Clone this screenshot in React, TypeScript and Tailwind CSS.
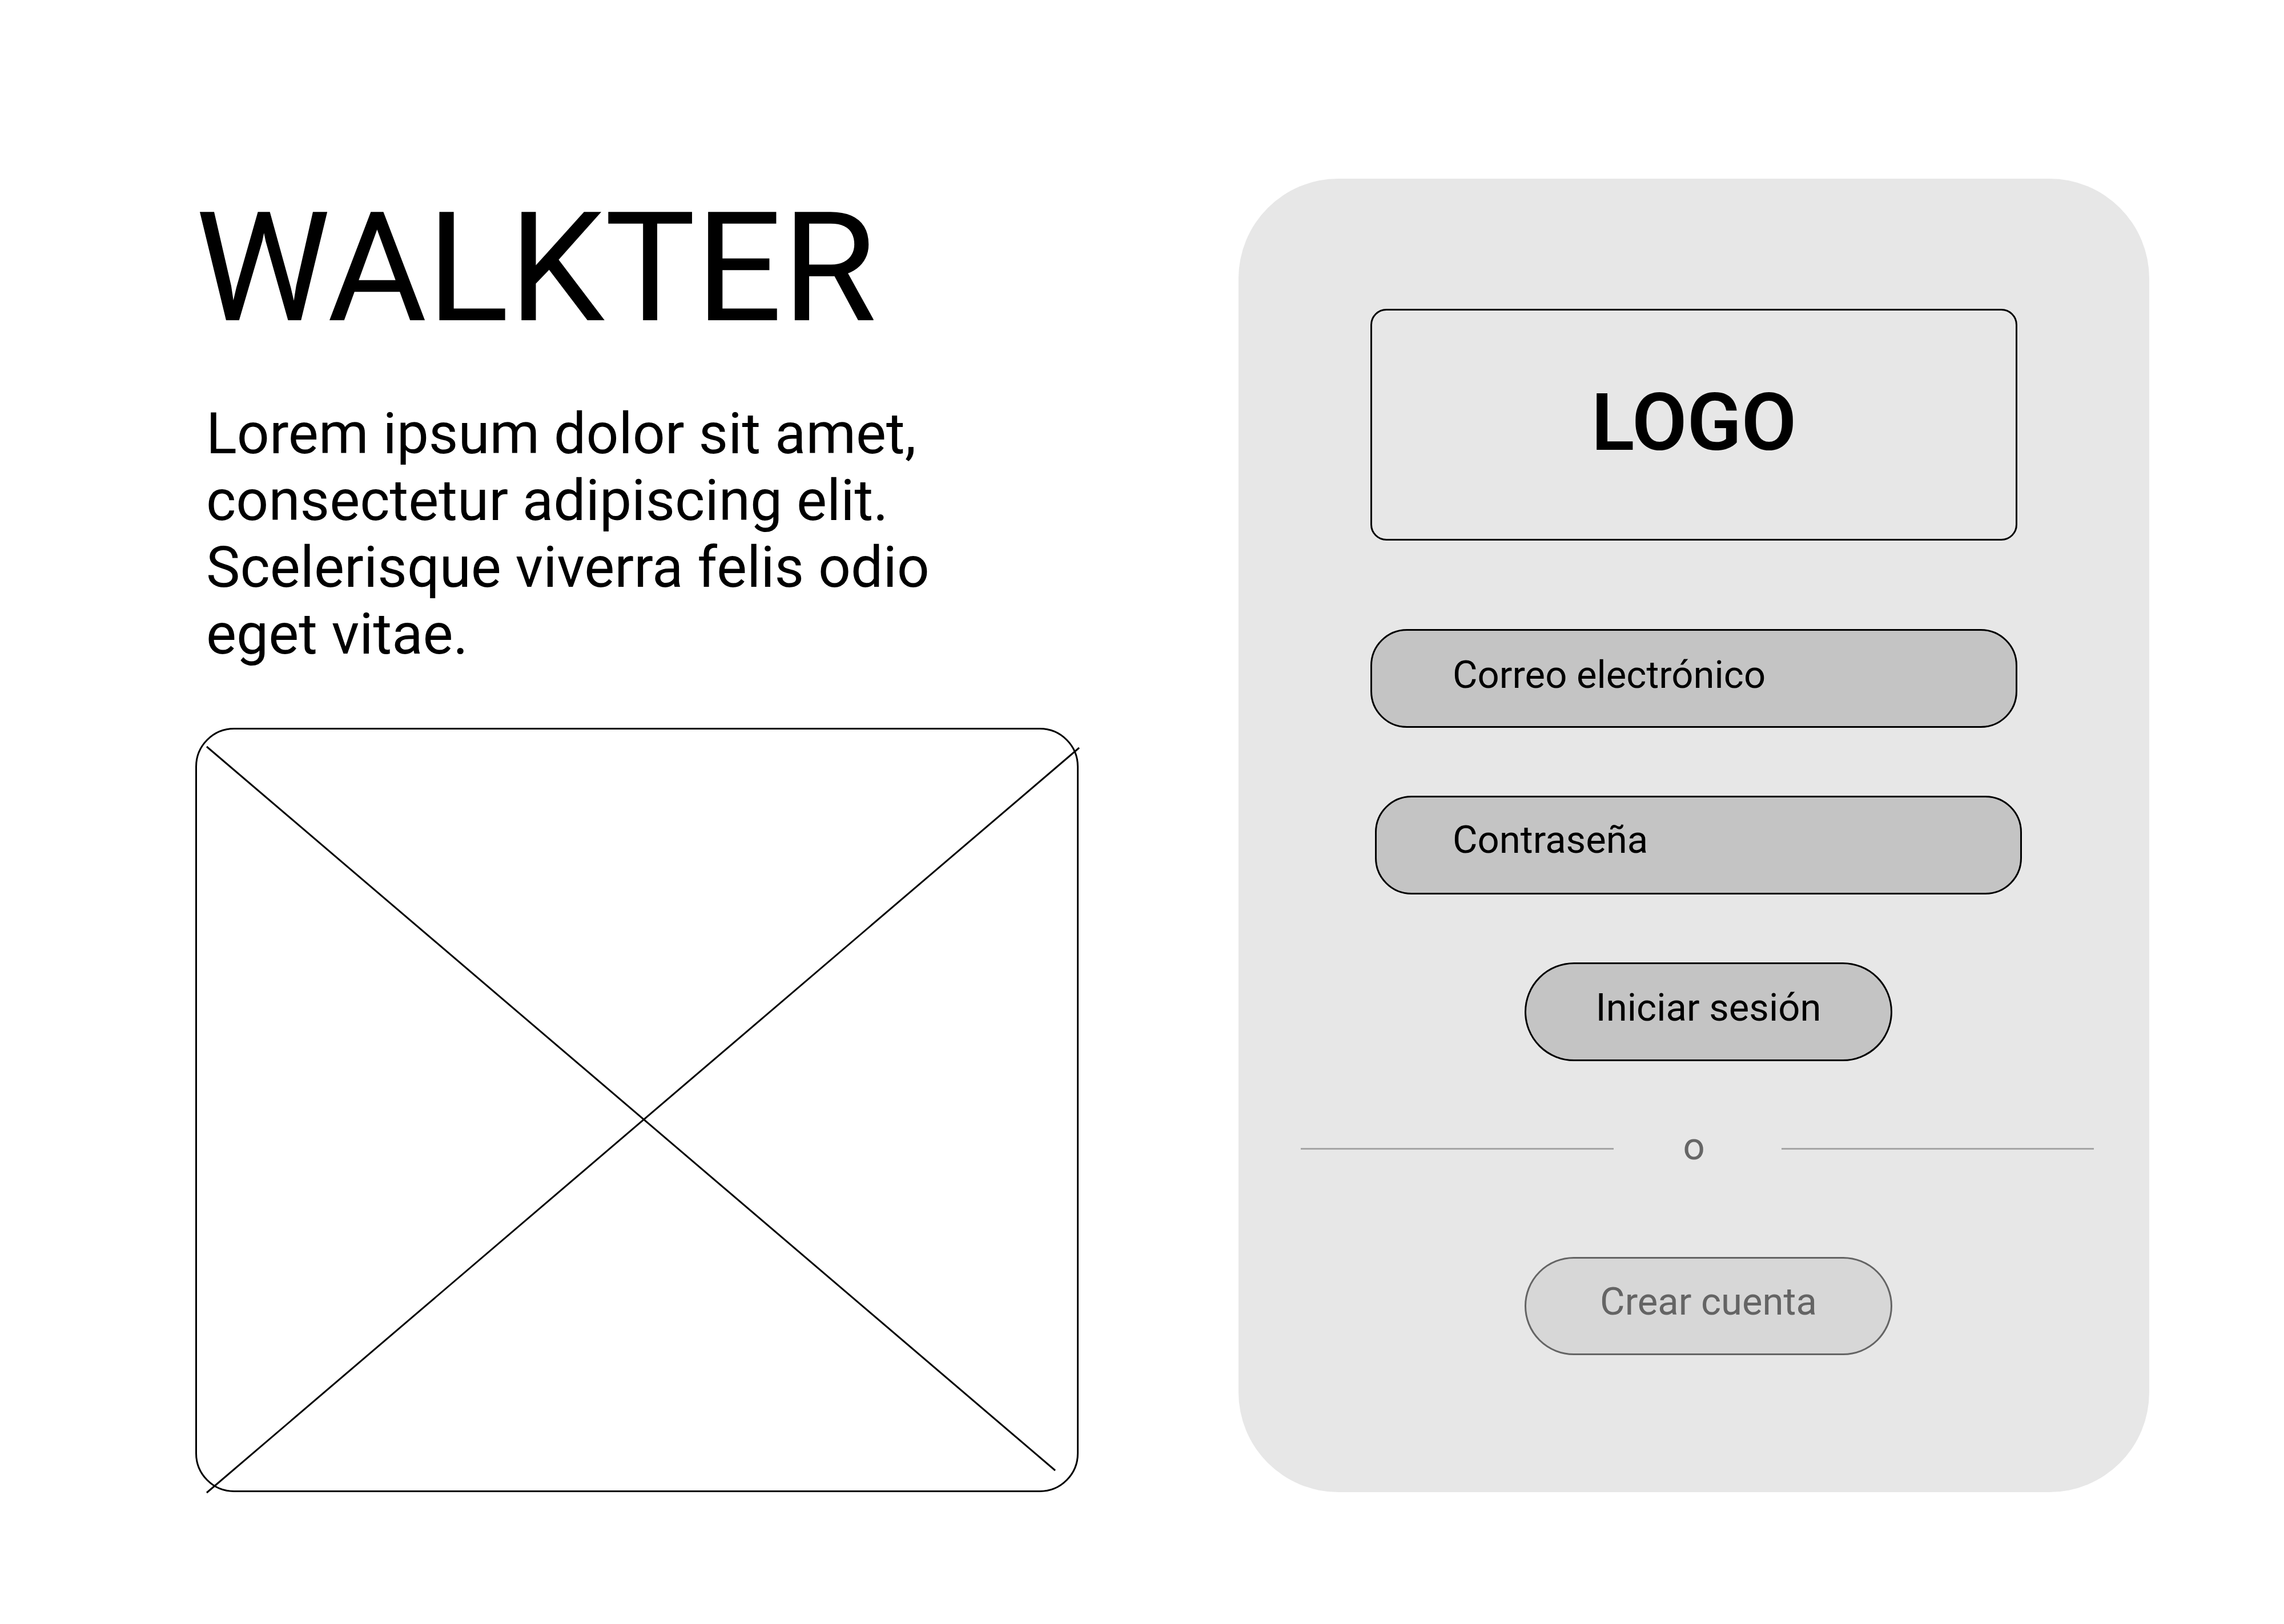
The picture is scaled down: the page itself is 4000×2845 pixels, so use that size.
import type { InputHTMLAttributes, ReactNode } from "react";

// The label lies over the empty input and gives way once something is typed.
function Field({
  id,
  label,
  className,
  labelClassName,
  ...rest
}: {
  id: string;
  label: string;
  labelClassName: string;
} & InputHTMLAttributes<HTMLInputElement>) {
  return (
    <div className={`relative ${className}`}>
      <input
        id={id}
        placeholder=" "
        className="peer block w-full rounded-[64px] border-3 border-black bg-[#c4c4c4] px-[138px] pt-[37px] pb-[51px] text-[67px] leading-[79px] text-black outline-none"
        {...rest}
      />
      <label
        htmlFor={id}
        className={`absolute inset-0 cursor-text text-[67px] leading-[79px] peer-[:not(:placeholder-shown)]:hidden ${labelClassName}`}
      >
        {label}
      </label>
    </div>
  );
}

function PillButton({
  type,
  tone,
  children,
}: {
  type: "submit" | "button";
  tone: string;
  children: ReactNode;
}) {
  return (
    <button
      type={type}
      className={`w-[644px] rounded-full border-3 pb-[51px] text-[67px] leading-[79px] ${tone}`}
    >
      {children}
    </button>
  );
}

function ImagePlaceholder() {
  return (
    <div className="mt-[106px] flex-1 rounded-[68px] border-3 border-black">
      <svg
        viewBox="0 0 1541 1333"
        preserveAspectRatio="none"
        className="block size-full overflow-visible"
        fill="none"
        stroke="black"
        strokeWidth="3"
        aria-hidden="true"
      >
        <path d="M17 30L1503 1298M1545 32L17 1337" />
      </svg>
    </div>
  );
}

export default function App() {
  return (
    <main className="grid min-h-screen grid-cols-[1547fr_1595fr] content-start gap-x-[280px] bg-white pt-[313px] pr-[236px] pb-[231px] pl-[342px] font-['Roboto',sans-serif] text-black">
      <section className="flex flex-col">
        <h1 className="text-[267px] leading-[313px]">WALKTER</h1>
        <p className="mt-[75px] max-w-[1340px] pl-[19px] text-[100px] leading-[117px]">
          Lorem ipsum dolor sit amet, consectetur adipiscing elit. Scelerisque viverra felis odio
          eget vitae.
        </p>
        <ImagePlaceholder />
      </section>

      <form
        onSubmit={(e) => e.preventDefault()}
        className="flex flex-col rounded-[175px] bg-[#e7e7e7] pt-[228px] pb-[239px]"
      >
        <div className="mx-[231px] flex h-[406px] items-center justify-center rounded-[28px] border-3 border-black pb-2 text-[140px] leading-[165px] font-semibold">
          LOGO
        </div>

        <Field
          id="email"
          label="Correo electrónico"
          type="email"
          autoComplete="email"
          className="mx-[231px] mt-[155px]"
          labelClassName="pt-[41px] pl-[144px]"
        />
        <Field
          id="password"
          label="Contraseña"
          type="password"
          autoComplete="current-password"
          className="mt-[119px] mr-[223px] ml-[239px]"
          labelClassName="pt-[38px] pl-[136px]"
        />

        <div className="mt-[119px] flex justify-center pl-[51px]">
          <PillButton type="submit" tone="border-black bg-[#c4c4c4] pt-[37px] text-black">
            Iniciar sesión
          </PillButton>
        </div>

        <div className="mt-[110px] mr-[97px] ml-[109px] grid grid-cols-[1fr_294px_1fr] items-center">
          <span className="mt-2 h-[3px] bg-[#a5a5a5]" />
          <span className="pr-3 text-center text-[67px] leading-[79px] text-[#666666]">o</span>
          <span className="mt-2 h-[3px] bg-[#a5a5a5]" />
        </div>

        <div className="mt-[154px] flex justify-center pl-[51px]">
          <PillButton type="button" tone="border-[#646464] bg-[#d7d7d7] pt-9 text-[#646464]">
            Crear cuenta
          </PillButton>
        </div>
      </form>
    </main>
  );
}
